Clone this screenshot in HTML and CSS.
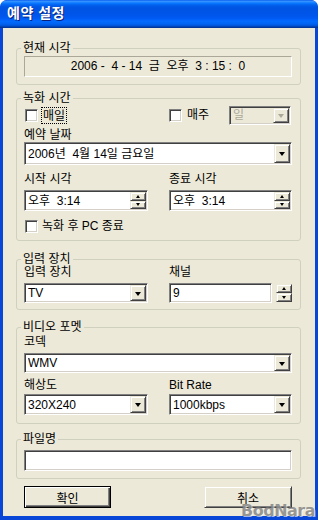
FILE: index.html
```html
<!DOCTYPE html>
<html lang="ko">
<head>
    <meta charset="UTF-8">
    <meta name="viewport" content="width=device-width, initial-scale=1.0">
    <title>예약 설정</title>
    <link rel="stylesheet" href="styles.css">
</head>
<body>
    <div class="window">
        <div class="titlebar">예약 설정</div>

        <div class="client">
            <fieldset class="group group-now">
                <legend>현재 시각</legend>
                <div class="static">2006 -  4 - 14  금  오후  3 : 15 :  0</div>
            </fieldset>

            <fieldset class="group group-record">
                <legend>녹화 시간</legend>
                <div class="two-col repeat-row">
                    <div class="check"><span class="box"></span><span class="focus">매일</span></div>
                    <div class="week">
                        <div class="check"><span class="box"></span><span>매주</span></div>
                        <div class="combo combo-day disabled"><span class="value">일</span><span class="drop"></span></div>
                    </div>
                </div>

                <div class="label label-date">예약 날짜</div>
                <div class="combo combo-date"><span class="value">2006년  4월 14일 금요일</span><span class="drop"></span></div>

                <div class="two-col time-row">
                    <div>
                        <div class="label">시작 시각</div>
                        <div class="edit spin-edit">
                            <span class="value">오후  3:14</span>
                            <span class="spin"><span class="up"></span><span class="down"></span></span>
                        </div>
                    </div>
                    <div>
                        <div class="label">종료 시각</div>
                        <div class="edit spin-edit">
                            <span class="value">오후  3:14</span>
                            <span class="spin"><span class="up"></span><span class="down"></span></span>
                        </div>
                    </div>
                </div>

                <div class="check check-off"><span class="box"></span><span>녹화 후 PC 종료</span></div>
            </fieldset>

            <fieldset class="group group-input">
                <legend>입력 장치</legend>
                <div class="two-col">
                    <div>
                        <div class="label label-tight">입력 장치</div>
                        <div class="combo field-gap"><span class="value">TV</span><span class="drop"></span></div>
                    </div>
                    <div>
                        <div class="label label-tight">채널</div>
                        <div class="channel field-gap">
                            <div class="edit"><span class="value">9</span></div>
                            <span class="updown"><span class="up"></span><span class="down"></span></span>
                        </div>
                    </div>
                </div>
            </fieldset>

            <fieldset class="group group-video">
                <legend>비디오 포멧</legend>
                <div class="label label-codec">코덱</div>
                <div class="combo field-gap"><span class="value">WMV</span><span class="drop"></span></div>
                <div class="two-col res-row">
                    <div>
                        <div class="label">해상도</div>
                        <div class="combo combo-res"><span class="value">320X240</span><span class="drop"></span></div>
                    </div>
                    <div>
                        <div class="label">Bit Rate</div>
                        <div class="combo combo-res"><span class="value">1000kbps</span><span class="drop"></span></div>
                    </div>
                </div>
            </fieldset>

            <fieldset class="group group-file">
                <legend>파일명</legend>
                <div class="edit file-edit"><span class="value"></span></div>
            </fieldset>

            <div class="buttons">
                <button class="btn btn-default">확인</button>
                <button class="btn btn-cancel">취소</button>
            </div>
        </div>

        <div class="watermark">BodNara</div>
    </div>
</body>
</html>
```

FILE: styles.css
```css
:root {
    --face: #ece9d8;
    --group-line: #d0d0bf;
    --shadow: #808080;
    --dark: #404040;
    --disabled: #aca899;
}

* {
    box-sizing: border-box;
}

body {
    margin: 0;
    background: #fff;
    font-family: "Liberation Sans", "Noto Sans CJK KR", sans-serif;
    font-size: 12px;
    line-height: 14px;
    color: #000;
}

.window {
    position: relative;
    width: 318px;
    height: 520px;
    display: flex;
    flex-direction: column;
    padding: 0 3px 4px 3px;
    background: #0846d8;
    border-radius: 7px 7px 0 0;
    overflow: hidden;
}

.titlebar {
    height: 28px;
    margin: 0 -3px;
    padding: 6px 0 0 7px;
    color: #fff;
    font-size: 14px;
    font-weight: bold;
    letter-spacing: 0.5px;
    text-shadow: 1px 1px #0a1f7a;
    background: linear-gradient(to bottom, #0058ee 0%, #3a93ff 4%, #288eff 7%, #127dff 10%, #036ffc 14%, #0262ee 18%, #0057e5 24%, #0054e3 30%, #0055eb 56%, #005bf5 66%, #026afe 76%, #0062ef 86%, #0052d6 92%, #0040ab 96%, #003092 100%);
    border-radius: 7px 7px 0 0;
}

.client {
    flex: 1;
    background: var(--face);
    padding: 13px 14px 0 13px;
}

/* group boxes */
.group {
    margin: 0;
    min-width: 0;
    border: 1px solid var(--group-line);
    border-radius: 3px;
    padding: 0 8px 7px 7px;
}

.group legend {
    padding: 0 2px;
    margin-left: -3px;
    line-height: 14px;
}

.group-record {
    margin-top: 6px;
    padding-bottom: 6px;
}

.group-input {
    margin-top: 11px;
    padding-bottom: 6px;
}

.group-video {
    margin-top: 10px;
    padding-bottom: 8px;
}

.group-file {
    margin-top: 8px;
}

.static {
    margin-top: 1px;
    height: 21px;
    border: 1px solid;
    border-color: var(--disabled) #fff #fff var(--disabled);
    text-align: center;
    line-height: 19px;
    white-space: pre;
}

.two-col {
    display: grid;
    grid-template-columns: 124px 1fr;
    column-gap: 21px;
}

.label {
    line-height: 14px;
}

.label-tight {
    line-height: 13px;
}

.label-date {
    margin-top: 3px;
}

.label-codec {
    margin-top: 2px;
    line-height: 13px;
}

/* checkboxes */
.check {
    display: flex;
    align-items: center;
    gap: 4px;
    height: 16px;
}

.box {
    width: 13px;
    height: 13px;
    margin-left: 1px;
    background: #fff;
    border: 1px solid;
    border-color: var(--shadow) #fff #fff var(--shadow);
    box-shadow: inset 1px 1px var(--dark), inset -1px -1px #d4d0c8;
}

.focus {
    padding: 1px 1px 0;
    outline: 1px dotted #000;
}

.repeat-row {
    height: 20px;
    align-items: center;
}

.week {
    display: flex;
    align-items: center;
    justify-content: space-between;
    padding-right: 1px;
}

.week .check {
    gap: 5px;
}

.week .box {
    margin-left: 0;
}

.check-off {
    margin-top: 7px;
}

/* combos, edits */
.combo,
.edit {
    display: flex;
    align-items: center;
    height: 20px;
    padding: 1px 1px 1px 3px;
    background: #fff;
    border: 1px solid;
    border-color: var(--shadow) #fff #fff var(--shadow);
    box-shadow: inset 1px 1px var(--dark), inset -1px -1px #d4d0c8;
}

.value {
    flex: 1;
    white-space: pre;
    overflow: hidden;
}

.drop,
.spin span,
.updown span,
.btn {
    background: var(--face);
    border: 1px solid;
    border-color: var(--face) var(--dark) var(--dark) var(--face);
    box-shadow: inset 1px 1px #fff, inset -1px -1px var(--shadow);
}

.drop {
    align-self: stretch;
    width: 16px;
    display: flex;
    align-items: center;
    justify-content: center;
}

.drop::after {
    content: "";
    border-left: 3.5px solid transparent;
    border-right: 3.5px solid transparent;
    border-top: 4px solid #000;
    margin-top: 1px;
}

.combo-date {
    height: 23px;
}

.combo-day {
    width: 62px;
    height: 19px;
}

.disabled {
    background: var(--face);
    color: var(--disabled);
}

.disabled .drop::after {
    border-top-color: var(--disabled);
}

.time-row {
    margin-top: 7px;
}

.spin-edit {
    margin-top: 4px;
    height: 21px;
}

.spin,
.updown {
    align-self: stretch;
    width: 16px;
    display: flex;
    flex-direction: column;
}

.spin span,
.updown span {
    flex: 1;
    display: flex;
    align-items: center;
    justify-content: center;
}

.up::after,
.down::after {
    content: "";
    border-left: 2.5px solid transparent;
    border-right: 2.5px solid transparent;
}

.up::after {
    border-bottom: 3px solid #000;
}

.down::after {
    border-top: 3px solid #000;
}

.field-gap {
    margin-top: 4px;
}

.channel {
    display: flex;
    gap: 4px;
    height: 20px;
}

.channel .edit {
    flex: 1;
}

.updown {
    width: 16px;
    padding: 1px 0;
}

.res-row {
    margin-top: 5px;
}

.combo-res {
    margin-top: 2px;
    height: 21px;
}

.file-edit {
    margin-top: 4px;
    height: 21px;
}

/* bottom buttons */
.buttons {
    display: flex;
    justify-content: space-between;
    margin: 7px 9px 0 8px;
}

.btn {
    width: 88px;
    height: 22px;
    padding: 0;
    font-family: inherit;
    font-size: 12px;
    color: #000;
}

.btn-default {
    width: 87px;
    border-color: #000;
    box-shadow: inset 1px 1px #fff, inset -1px -1px var(--dark), inset -2px -2px var(--shadow);
}

.watermark {
    position: absolute;
    right: 3px;
    bottom: 0;
    font-family: "DejaVu Sans", sans-serif;
    font-size: 16px;
    line-height: 18px;
    font-weight: bold;
    letter-spacing: -0.5px;
    color: rgba(120, 120, 120, 0.75);
    text-shadow: 1px 1px rgba(255, 255, 255, 0.6);
}
```
